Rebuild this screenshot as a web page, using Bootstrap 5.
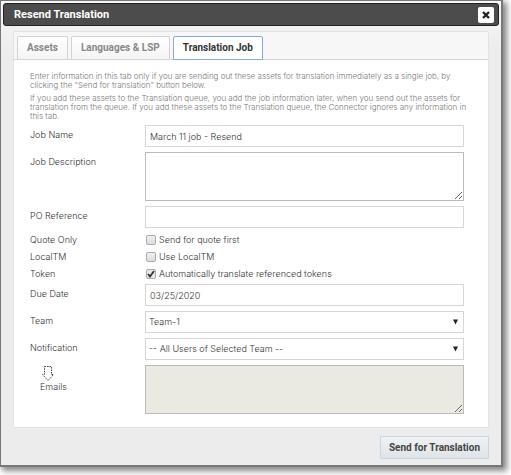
<!DOCTYPE html>
<html lang="en">
<head>
<meta charset="utf-8">
<meta name="viewport" content="width=device-width, initial-scale=1">
<title>Resend Translation</title>
<link href="https://cdn.jsdelivr.net/npm/bootstrap@5.3.0/dist/css/bootstrap.min.css" rel="stylesheet">
<style>
body{font-family:Inter,"Liberation Sans",sans-serif;font-size:9px;font-weight:300;line-height:12px;color:#333;background:#fff;padding:0 8px 9px 0}
.dialog-box{background:linear-gradient(#f8f8f8,#ececec 50px);border:1px solid #777;border-width:1px 2px 2px 1px;box-shadow:3px 3px 6px 1px #888;padding:2px}
.title-bar{background:#4c4c4c;border:1px solid #222;border-radius:3px;height:23px;padding:0 4px 0 10px;color:#fff}
.title-bar h1{font-family:Roboto,"Liberation Sans",sans-serif;font-size:11px;line-height:14px;font-weight:700;margin:0}
.close-btn{width:16px;height:16px;padding:0;border:0;border-radius:2px;background:#fff}
.panel-box{margin:5px 10px 0;border:1px solid #e2e2e2;border-radius:2px;background:#fff}
.tab-strip{background:#f7f7f7;border-bottom:1px solid #d4d4d4;padding:4px 3px 0;gap:3px}
.tab-strip .nav-link{font-family:Roboto,"Liberation Sans",sans-serif;font-size:10px;line-height:12px;font-weight:700;color:#888;padding:5px 9px;border:1px solid #d2d2d2;border-bottom:0;border-radius:2px 2px 0 0;background:linear-gradient(#fff,#f4f4f4);margin:0}
.tab-strip .nav-link.active{color:#333;background:#fff;border:1px solid #85a9e6;margin-bottom:-1px}
.form-area{padding:12px 24px 13px 16px}
.hint{color:#777;font-size:8px;line-height:9px;margin:0 -18px 4px 0}
.form-rows{margin-top:4px}
.field-row{display:grid;grid-template-columns:115px 1fr;margin-bottom:5px}
.field-row>label{padding-top:4px}
.field-row>.mail-label{padding:1px 0 0 10px}
.check-group{margin:-2px 0 2px}
.check-row{display:grid;grid-template-columns:115px 1fr;height:17px;align-items:center}
.form-rows .form-control,.form-rows .form-select{height:22px;min-height:0;border:1px solid #d6d6d6;border-radius:0;padding:0 4px;font-size:9px;font-weight:300;line-height:12px;color:#333;background-color:#fff}
.form-rows .form-select{padding:0 16px 0 3px;background-image:url("data:image/svg+xml,%3Csvg xmlns='http://www.w3.org/2000/svg' viewBox='0 0 6 6'%3E%3Cpath d='M0 0h6L3 6z' fill='%23222'/%3E%3C/svg%3E");background-size:5px 6px;background-position:right 5px center}
.form-rows textarea.form-control{height:49px;border-color:#bbb;resize:vertical}
.form-rows textarea.mail-list{background:#eaeae2}
.tick{appearance:none;width:10px;height:10px;margin:0 3px 0 1px;border:1px solid #aaa;border-radius:2px;background:linear-gradient(#f0f0f0,#ddd)}
.tick:checked{background:url("data:image/svg+xml,%3Csvg xmlns='http://www.w3.org/2000/svg' viewBox='0 0 8 8'%3E%3Cpath d='M1 4l2 2.5L7 1' fill='none' stroke='%23333' stroke-width='1.8'/%3E%3C/svg%3E") #e8e8e8}
.send-btn{margin:8px 10px 4px;height:23px;padding:0 8px;border:1px solid #cbd5de;border-radius:1px;background:linear-gradient(#f0f2f4,#dfe4e8);font-family:Roboto,"Liberation Sans",sans-serif;font-size:10px;line-height:12px;font-weight:700;color:#444}
</style>
</head>
<body>
<main class="dialog-box">
  <header class="title-bar d-flex align-items-center justify-content-between">
    <h1>Resend Translation</h1>
    <button type="button" class="close-btn d-flex align-items-center justify-content-center" aria-label="Close">
      <svg width="8" height="8" viewBox="0 0 8 8"><path d="M1 1l6 6M7 1L1 7" stroke="#222" stroke-width="2.4"/></svg>
    </button>
  </header>
  <section class="panel-box">
    <nav class="tab-strip nav">
      <a class="nav-link" href="#assets">Assets</a>
      <a class="nav-link" href="#languages">Languages &amp; LSP</a>
      <a class="nav-link active" href="#job" aria-current="page">Translation Job</a>
    </nav>
    <form class="form-area" id="job">
      <p class="hint">Enter information in this tab only if you are sending out these assets for translation immediately as a single job, by<br>clicking the "Send for translation" button below.</p>
      <p class="hint">If you add these assets to the Translation queue, you add the job information later, when you send out the assets for<br>translation from the queue. If you add these assets to the Translation queue, the Connector ignores any information in<br>this tab.</p>
      <div class="form-rows">
        <div class="field-row"><label for="name">Job Name</label><input class="form-control" id="name" type="text" value="March 11 job - Resend"></div>
        <div class="field-row"><label for="desc">Job Description</label><textarea class="form-control" id="desc"></textarea></div>
        <div class="field-row"><label for="po">PO Reference</label><input class="form-control" id="po" type="text"></div>
        <div class="check-group">
          <div class="check-row"><span>Quote Only</span><label class="d-flex align-items-center"><input class="tick" type="checkbox">Send for quote first</label></div>
          <div class="check-row"><span>LocalTM</span><label class="d-flex align-items-center"><input class="tick" type="checkbox">Use LocalTM</label></div>
          <div class="check-row"><span>Token</span><label class="d-flex align-items-center"><input class="tick" type="checkbox" checked>Automatically translate referenced tokens</label></div>
        </div>
        <div class="field-row"><label for="due">Due Date</label><input class="form-control" id="due" type="text" value="03/25/2020"></div>
        <div class="field-row"><label for="team">Team</label><select class="form-select" id="team"><option>Team-1</option></select></div>
        <div class="field-row"><label for="notify">Notification</label><select class="form-select" id="notify"><option>-- All Users of Selected Team --</option></select></div>
        <div class="field-row mb-0"><label for="emails" class="mail-label"><svg class="d-block" width="14" height="15" viewBox="0 0 14 15"><path d="M4.500 .5h7v8h2l-5.500 6-5.500-6h2z" fill="none" stroke="#444" stroke-dasharray="1.500 1"/></svg>Emails</label><textarea class="form-control mail-list" id="emails"></textarea></div>
      </div>
    </form>
  </section>
  <footer class="d-flex justify-content-end"><button type="button" class="send-btn">Send for Translation</button></footer>
</main>
<script src="https://cdn.jsdelivr.net/npm/bootstrap@5.3.0/dist/js/bootstrap.bundle.min.js"></script>
</body>
</html>
